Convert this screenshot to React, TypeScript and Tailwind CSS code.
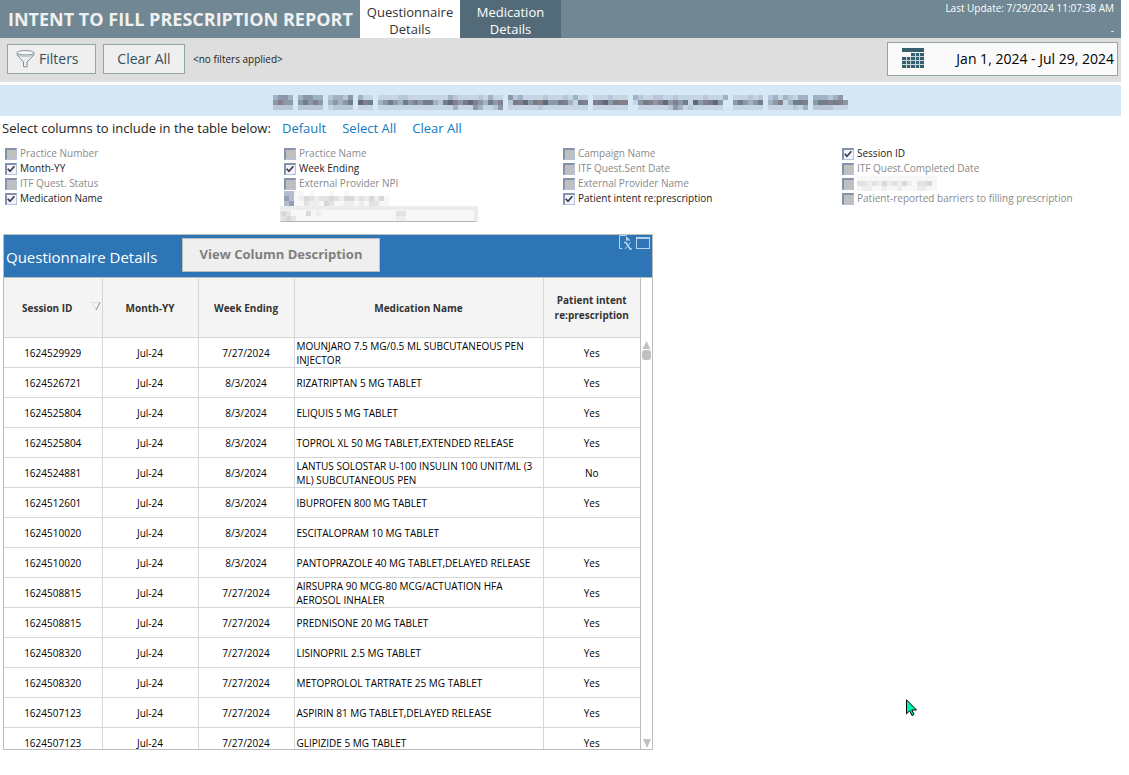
import { useState } from 'react'

type Column = {
  id: string
  label: string
  checked?: boolean
  masked?: 'label' | 'all'
}

type Row = {
  session: string
  month: string
  week: string
  medication: string
  intent: string
}

const COLUMNS: Column[] = [
  { id: 'practice-number', label: 'Practice Number' },
  { id: 'practice-name', label: 'Practice Name' },
  { id: 'campaign-name', label: 'Campaign Name' },
  { id: 'session-id', label: 'Session ID', checked: true },
  { id: 'month', label: 'Month-YY', checked: true },
  { id: 'week-ending', label: 'Week Ending', checked: true },
  { id: 'sent-date', label: 'ITF Quest.Sent Date' },
  { id: 'completed-date', label: 'ITF Quest.Completed Date' },
  { id: 'status', label: 'ITF Quest. Status' },
  { id: 'provider-npi', label: 'External Provider NPI' },
  { id: 'provider-name', label: 'External Provider Name' },
  { id: 'masked-date', label: '', masked: 'label' },
  { id: 'medication', label: 'Medication Name', checked: true },
  { id: 'masked-column', label: '', masked: 'all' },
  { id: 'intent', label: 'Patient intent re:prescription', checked: true },
  { id: 'barriers', label: 'Patient-reported barriers to filling prescription' },
]

const ROWS: Row[] = [
  { session: '1624529929', month: 'Jul-24', week: '7/27/2024', medication: 'MOUNJARO 7.5 MG/0.5 ML SUBCUTANEOUS PEN INJECTOR', intent: 'Yes' },
  { session: '1624526721', month: 'Jul-24', week: '8/3/2024', medication: 'RIZATRIPTAN 5 MG TABLET', intent: 'Yes' },
  { session: '1624525804', month: 'Jul-24', week: '8/3/2024', medication: 'ELIQUIS 5 MG TABLET', intent: 'Yes' },
  { session: '1624525804', month: 'Jul-24', week: '8/3/2024', medication: 'TOPROL XL 50 MG TABLET,EXTENDED RELEASE', intent: 'Yes' },
  { session: '1624524881', month: 'Jul-24', week: '8/3/2024', medication: 'LANTUS SOLOSTAR U-100 INSULIN 100 UNIT/ML (3 ML) SUBCUTANEOUS PEN', intent: 'No' },
  { session: '1624512601', month: 'Jul-24', week: '8/3/2024', medication: 'IBUPROFEN 800 MG TABLET', intent: 'Yes' },
  { session: '1624510020', month: 'Jul-24', week: '8/3/2024', medication: 'ESCITALOPRAM 10 MG TABLET', intent: '' },
  { session: '1624510020', month: 'Jul-24', week: '8/3/2024', medication: 'PANTOPRAZOLE 40 MG TABLET,DELAYED RELEASE', intent: 'Yes' },
  { session: '1624508815', month: 'Jul-24', week: '7/27/2024', medication: 'AIRSUPRA 90 MCG-80 MCG/ACTUATION HFA AEROSOL INHALER', intent: 'Yes' },
  { session: '1624508815', month: 'Jul-24', week: '7/27/2024', medication: 'PREDNISONE 20 MG TABLET', intent: 'Yes' },
  { session: '1624508320', month: 'Jul-24', week: '7/27/2024', medication: 'LISINOPRIL 2.5 MG TABLET', intent: 'Yes' },
  { session: '1624508320', month: 'Jul-24', week: '7/27/2024', medication: 'METOPROLOL TARTRATE 25 MG TABLET', intent: 'Yes' },
  { session: '1624507123', month: 'Jul-24', week: '7/27/2024', medication: 'ASPIRIN 81 MG TABLET,DELAYED RELEASE', intent: 'Yes' },
  { session: '1624507123', month: 'Jul-24', week: '7/27/2024', medication: 'GLIPIZIDE 5 MG TABLET', intent: 'Yes' },
]

// Masked text is drawn as 5px blocks, one character per block
const BLUE_SHADES: Record<string, string> = {
  '1': '#c5d5e4',
  '2': '#b7c7d7',
  '3': '#a1b2c2',
  '4': '#8a98a7',
  '5': '#727d8c',
  '6': '#857f89',
  '7': '#606879',
}

const GREY_SHADES: Record<string, string> = {
  '1': '#f7f7f8',
  '2': '#ededef',
  '3': '#e2e2e4',
  '4': '#d8d7da',
  '5': '#e8e3e0',
  '6': '#b5bccb',
  '7': '#93a0b5',
}

const NOTICE_MASK = [
  '3443.34433.23324.311.1111221111111132111121311.4231111211121311.1112111.3211221121111121113.111212.23132133.333234.',
  '4644.45464.34345.765.3454354645532576457643546.2567456744563156.6574566.145646746451746574..454345.34613556.4556564',
  '2222.22222.12222.111.1111111111111113111431124.1111112111111111.1111111..111111243121111110.111111.11111213.2222111',
]

function Mosaic({ rows, shades }: { rows: string[]; shades: Record<string, string> }) {
  const width = Math.max(...rows.map((row) => row.length)) * 5
  const height = rows.length * 5
  return (
    <svg width={width} height={height} viewBox={`0 0 ${width} ${height}`} shapeRendering="crispEdges" aria-hidden="true" className="shrink-0">
      {rows.map((row, y) =>
        row.split('').map((shade, x) =>
          shades[shade] ? <rect key={`${x}-${y}`} x={x * 5} y={y * 5} width="5" height="5" fill={shades[shade]} /> : null
        )
      )}
    </svg>
  )
}

function FunnelIcon() {
  return (
    <svg width="19" height="18" viewBox="0 0 19 18" fill="none" stroke="#7d9199" aria-hidden="true">
      <ellipse cx="9.5" cy="2.800" rx="8.500" ry="2.200" fill="#f8f8f8" />
      <path d="M1 3.500v1.300L7.500 12v4.800h3.500V12L18 4.800V3.500" />
      <path d="M2 5.200c3 1.500 12 1.500 15 0" stroke="#a9b6bd" />
    </svg>
  )
}

function CalendarIcon() {
  return (
    <svg width="22" height="20" viewBox="0 0 22 20" shapeRendering="crispEdges" aria-hidden="true">
      <rect width="22" height="4" fill="#355f6f" />
      <path d="M9 5h13v15H0V9h9z" fill="#355f6f" />
      <path d="M4 9h1v11H4zM8 9h1v11H8zM13 5h1v15h-1zM17 5h1v15h-1zM9 8h13v1H9zM0 12h22v1H0zM0 16h22v1H0z" fill="#c9d6da" />
    </svg>
  )
}

function ExportIcon() {
  return (
    <svg width="14" height="15" viewBox="0 0 14 15" fill="none" stroke="#b9d3ee" aria-hidden="true">
      <path d="M3.500 13.500h-3V.5h7" />
      <path d="M7 1l4.500 4.500H7z" fill="#b9d3ee" stroke="none" />
      <path d="M5 7.500h2l4 6.500h2" strokeWidth="1.600" />
      <path d="M11.500 7.500L6 14" />
    </svg>
  )
}

function ColumnOption({ column, checked, onToggle }: { column: Column; checked: boolean; onToggle: () => void }) {
  if (column.masked === 'all') {
    return (
      <div className="flex h-[15px] items-end">
        <Mosaic rows={['661', '761', '671']} shades={GREY_SHADES} />
        <Mosaic rows={['1.1...1..1........', '243253432442324241', '132214311221213511']} shades={GREY_SHADES} />
      </div>
    )
  }

  return (
    <label className={`flex h-[15px] items-center gap-[3px] whitespace-nowrap ${checked ? 'text-[#222]' : 'text-[#8a8a8a]'}`}>
      <span className="grid h-3 w-3 shrink-0 place-items-center">
        <input
          type="checkbox"
          checked={checked}
          onChange={onToggle}
          aria-label={column.label || 'Masked column'}
          className="col-start-1 row-start-1 m-0 h-3 w-3 appearance-none border border-t-2 border-l-2 border-t-[#8493ab] border-r-[#b4c3dd] border-b-[#b4c3dd] border-l-[#8493ab] bg-[#bfbfbf] checked:bg-[#f3f3ff]"
        />
        {checked && (
          <svg width="8" height="8" viewBox="0 0 8 8" fill="none" stroke="#3c3c46" strokeWidth="1.700" className="pointer-events-none col-start-1 row-start-1">
            <path d="M.7 3.700L3 6.300 7.400 1.200" />
          </svg>
        )}
      </span>
      {column.masked ? <Mosaic rows={['1111111111111111', '3323242324213341', '1221121121112211']} shades={GREY_SHADES} /> : column.label}
    </label>
  )
}

export default function App() {
  const [selected, setSelected] = useState<string[]>(COLUMNS.filter((c) => c.checked).map((c) => c.id))
  const [tab, setTab] = useState('questionnaire')

  const toggle = (id: string) => {
    setSelected((prev) => (prev.includes(id) ? prev.filter((item) => item !== id) : [...prev, id]))
  }

  return (
    <div className="min-h-screen bg-white pr-2 font-['Open_Sans','Noto_Sans',sans-serif] text-[#222]">
      {/* Header */}
      <header className="flex h-[38px] bg-[#718894] text-white">
        <h1 className="flex w-[360px] shrink-0 items-center pl-2 text-[18px] font-bold whitespace-nowrap text-[#f0f0f0]">
          INTENT TO FILL PRESCRIPTION REPORT
        </h1>
        <nav className="flex text-[13px] leading-[17px]">
          <button
            onClick={() => setTab('questionnaire')}
            className={`w-[100px] px-1 pt-1 ${tab === 'questionnaire' ? 'bg-white text-[#333]' : 'bg-[#536b79] text-white'}`}
          >
            Questionnaire Details
          </button>
          <button
            onClick={() => setTab('medication')}
            className={`w-[101px] px-3 pt-1 ${tab === 'medication' ? 'bg-white text-[#333]' : 'bg-[#536b79] text-white'}`}
          >
            Medication Details
          </button>
        </nav>
        <div className="ml-auto flex flex-col justify-between pr-[7px] text-right text-[10px] leading-4">
          <span>Last Update: 7/29/2024 11:07:38 AM</span>
          <span>-</span>
        </div>
      </header>

      {/* Filters */}
      <div className="flex h-11 items-center bg-[#dedede] pr-[3px] pb-[2px] pl-[7px]">
        <button className="flex h-[30px] w-[89px] items-center gap-1 border border-[#93a5a6] bg-[#efefef] pb-px pl-2 text-[14px] text-[#34505e]">
          <FunnelIcon />
          Filters
        </button>
        <button className="ml-[7px] h-[30px] w-[82px] border border-[#93a5a6] bg-[#efefef] pb-px text-[14px] text-[#34505e]">Clear All</button>
        <span className="ml-2 text-[10px]">&lt;no filters applied&gt;</span>
        <button className="ml-auto flex h-[34px] w-[231px] items-center justify-between border border-[#93a5a6] bg-[#fafafa] pr-[3px] pb-[2px] pl-[14px] text-[14px] text-black">
          <CalendarIcon />
          Jan 1, 2024 - Jul 29, 2024
        </button>
      </div>

      {/* Notice */}
      <div className="mt-[3px] flex h-[31px] items-center justify-center overflow-hidden bg-[#d6e7f6] pt-1">
        <Mosaic rows={NOTICE_MASK} shades={BLUE_SHADES} />
      </div>

      {/* Column picker */}
      <div className="flex h-[26px] items-center pl-[2px] text-[13px] whitespace-nowrap">
        <span className="w-[280px]">Select columns to include in the table below:</span>
        <div className="flex gap-4 text-[#0f7ac0]">
          <a href="#default">Default</a>
          <a href="#all">Select All</a>
          <a href="#clear">Clear All</a>
        </div>
      </div>
      <div className="mt-1 grid grid-cols-4 pl-[5px] text-[10px] leading-[15px]">
        {COLUMNS.map((column) => (
          <ColumnOption key={column.id} column={column} checked={selected.includes(column.id)} onToggle={() => toggle(column.id)} />
        ))}
        <div className="col-start-2 -ml-1 flex h-4 w-[198px] items-center border border-t-4 border-r-4 border-[#ececec] border-b-[#b5b5b5] bg-[#f7f7f7]">
          <Mosaic rows={['451..412...............33', '345....1...............22']} shades={GREY_SHADES} />
          <input aria-label="Masked value" className="h-full w-full min-w-0 bg-transparent outline-none" />
        </div>
      </div>

      {/* Questionnaire table */}
      <section className="mt-3 ml-[3px] w-[650px] max-w-full border border-[#bdbdbd]">
        <div className="flex h-[43px] items-center border-b border-[#bdbdbd] bg-[#2e75b6] pl-[2px]">
          <h2 className="w-[176px] pt-[2px] text-[15px] text-white">Questionnaire Details</h2>
          <button className="mb-[2px] h-[34px] w-[198px] border border-[#bdbdbd] bg-[#efefef] text-[13px] font-bold text-[#7f7f7f]">
            View Column Description
          </button>
          <div className="mr-[2px] ml-auto flex gap-[3px] self-start">
            <button aria-label="Export to Excel">
              <ExportIcon />
            </button>
            <button aria-label="Maximize" className="mt-[2px] h-3 w-[14px] border border-t-2 border-[#b9d3ee]"></button>
          </div>
        </div>
        <div className="flex max-h-[471px] overflow-hidden">
          <table className="flex-1 table-fixed border-collapse text-center text-[10px] leading-[15px] text-black">
            <colgroup>
              <col className="w-[98px]" />
              <col className="w-[96px]" />
              <col className="w-[96px]" />
              <col className="w-[249px]" />
              <col className="w-[97px]" />
            </colgroup>
            <thead>
              <tr className="h-[59px] border-b border-[#d6d6d6] bg-[#f4f4f4] text-[#333]">
                <th className="border-r border-[#d6d6d6] pt-[3px]">
                  <div className="flex items-center">
                    <span className="flex-1">Session ID</span>
                    <svg width="10" height="9" viewBox="0 0 10 9" fill="none" className="mr-px mb-1">
                      <path d="M1 .5h8M1 .5L5 8" stroke="#dcdcdc" />
                      <path d="M5 8L9 .5" stroke="#8b8b8b" />
                    </svg>
                  </div>
                </th>
                <th className="border-r border-[#d6d6d6] pt-[3px]">Month-YY</th>
                <th className="border-r border-[#d6d6d6] pt-[3px]">Week Ending</th>
                <th className="border-r border-[#d6d6d6] pt-[3px]">Medication Name</th>
                <th className="pt-[2px]">Patient intent re:prescription</th>
              </tr>
            </thead>
            <tbody>
              {ROWS.map((row, index) => (
                <tr key={index} className="h-[30px] border-b border-[#d6d6d6]">
                  <td className="border-r border-[#d6d6d6] pt-[2px]">{row.session}</td>
                  <td className="border-r border-[#d6d6d6] pt-[2px]">{row.month}</td>
                  <td className="border-r border-[#d6d6d6] pt-[2px]">{row.week}</td>
                  <td className="border-r border-[#d6d6d6] pt-px pl-[2px] text-left leading-[14px]">{row.medication}</td>
                  <td className="pt-[2px]">{row.intent}</td>
                </tr>
              ))}
            </tbody>
          </table>
          <div className="flex w-3 flex-col items-center border-l border-[#bdbdbd] pt-[63px] pb-px">
            <svg width="9" height="19" viewBox="0 0 9 19" fill="#c1c1c1">
              <path d="M4.500 0L8.500 8H.5z" />
              <rect y="9" width="9" height="10" rx="3" />
            </svg>
            <svg width="8" height="9" viewBox="0 0 8 9" fill="#c1c1c1" className="mt-auto">
              <path d="M0 0h8L4 9z" />
            </svg>
          </div>
        </div>
      </section>

      {/* Mouse pointer */}
      <svg width="12" height="18" viewBox="0 0 12 18" fill="#00f5b0" stroke="#000" className="pointer-events-none absolute top-[699px] left-[906px]">
        <path d="M.5.8v14l3.200-3 2.300 4.700 2-1-2.200-4.500h4.700z" />
      </svg>
    </div>
  )
}
